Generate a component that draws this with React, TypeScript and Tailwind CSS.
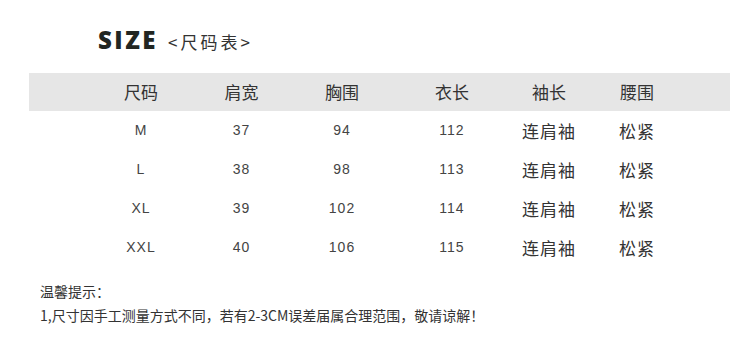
import React from 'react';

const rows = [
  { size: 'M', shoulder: '37', chest: '94', length: '112', sleeve: '连肩袖', waist: '松紧' },
  { size: 'L', shoulder: '38', chest: '98', length: '113', sleeve: '连肩袖', waist: '松紧' },
  { size: 'XL', shoulder: '39', chest: '102', length: '114', sleeve: '连肩袖', waist: '松紧' },
  { size: 'XXL', shoulder: '40', chest: '106', length: '115', sleeve: '连肩袖', waist: '松紧' },
];

const headers = ['尺码', '肩宽', '胸围', '衣长', '袖长', '腰围'];

const grid = 'grid grid-cols-[100px_101px_100px_120px_74px_102px] pl-[62px] items-center text-center';
const numCell = "text-[14px] tracking-[1px] font-['Liberation_Sans',sans-serif] text-[#444]";
const cjkCell = "text-[17px] tracking-[1px] text-[#333]";

const App: React.FC = () => {
  return (
    <div className="w-[750px] h-[359px] bg-white overflow-hidden font-['Noto_Sans_CJK_SC',sans-serif]">
      {/* Title */}
      <div className="flex items-center pl-[98px] h-[73px] pt-[7px]">
        <span className="text-[24px] font-extrabold tracking-[2.5px] text-[#222622] leading-none font-['Open_Sans',sans-serif]">
          SIZE
        </span>
        <span className="ml-[10px] mt-[2px] text-[17px] tracking-[3px] text-[#333] leading-none">
          &lt;尺码表&gt;
        </span>
      </div>

      {/* Table */}
      <div className="mx-[29px] w-[701px]">
        <div className={`${grid} h-[38px] bg-[#e6e6e6] text-[17px] text-[#333]`}>
          {headers.map((h) => (
            <div key={h}>{h}</div>
          ))}
        </div>
        {rows.map((r) => (
          <div key={r.size} className={`${grid} h-[39px]`}>
            <div className={numCell}>{r.size}</div>
            <div className={numCell}>{r.shoulder}</div>
            <div className={numCell}>{r.chest}</div>
            <div className={numCell}>{r.length}</div>
            <div className={cjkCell}>{r.sleeve}</div>
            <div className={cjkCell}>{r.waist}</div>
          </div>
        ))}
      </div>

      {/* Notes */}
      <div className="pl-[40px] pt-[12px] text-[14px] leading-[24px] text-[#333]">
        <p>温馨提示：</p>
        <p>1,尺寸因手工测量方式不同，若有2-3CM误差届属合理范围，敬请谅解！</p>
      </div>
    </div>
  );
};

export default App;
